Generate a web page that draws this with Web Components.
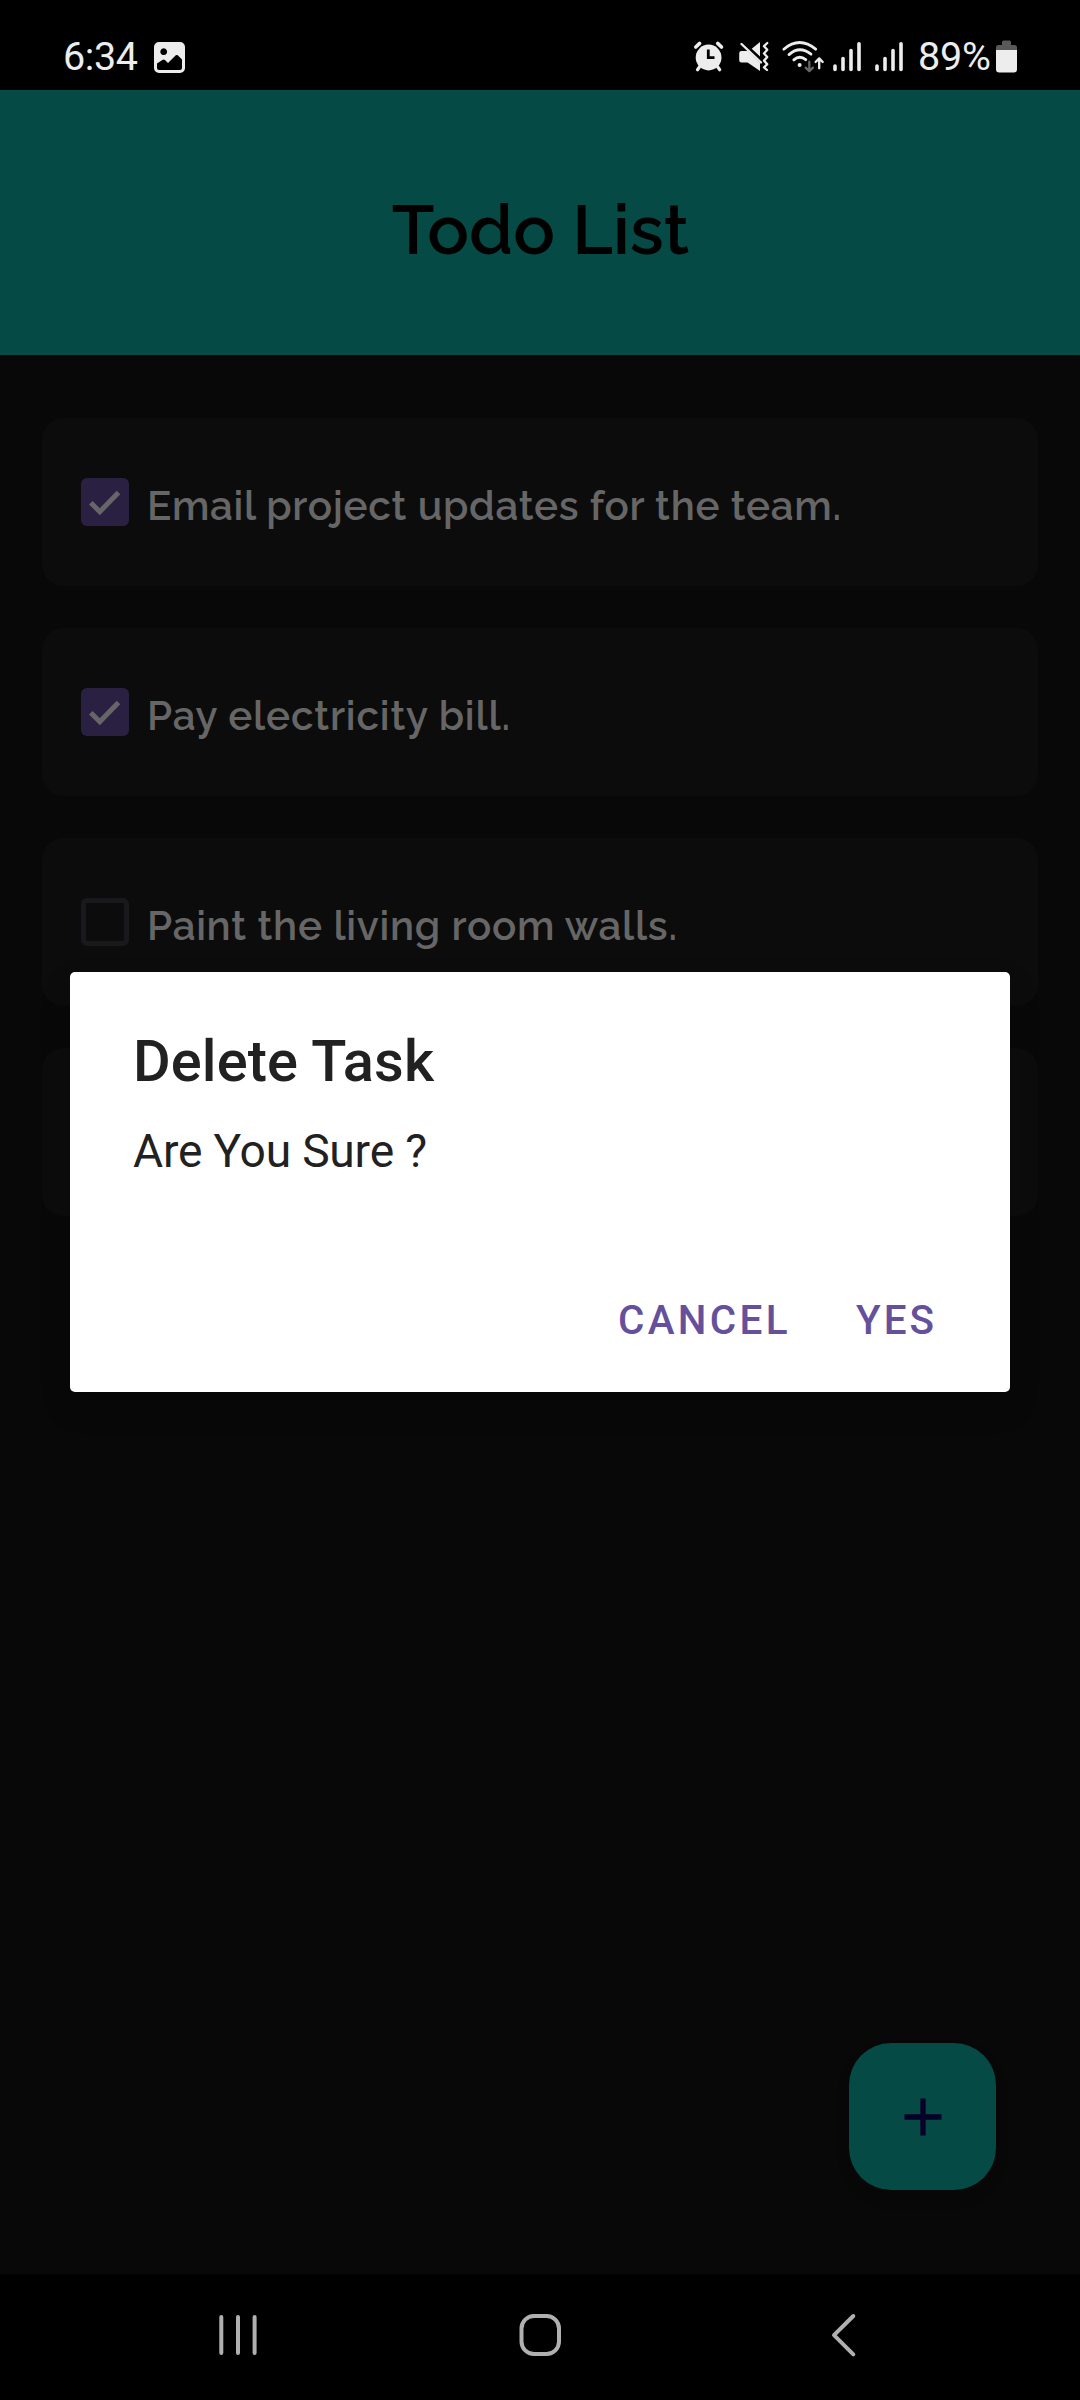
<!DOCTYPE html>
<html lang="en">
<head>
<meta charset="utf-8">
<title>Todo List</title>
<style>
html,body{margin:0;padding:0;background:#080808}
</style>
</head>
<body>
<todo-app></todo-app>
<script>
const define = (name, markup, setup) => {
  const template = document.createElement('template');
  template.innerHTML = markup;
  customElements.define(name, class extends HTMLElement {
    connectedCallback() {
      if (this.shadowRoot) return;
      this.attachShadow({mode: 'open'}).append(template.content.cloneNode(true));
      if (setup) setup(this, this.shadowRoot);
    }
  });
};

/* A single line of text, tracked so that it spans the given width. */
define('tracked-text', `
<style>:host{display:inline-block;white-space:nowrap}span{display:inline-block}</style>
<span></span>`, (host, root) => {
  const span = root.querySelector('span');
  span.textContent = host.getAttribute('text');
  const count = span.textContent.length - 1;
  const gap = (Number(host.getAttribute('span')) - span.getBoundingClientRect().width) / count;
  span.style.letterSpacing = gap + 'px';
  span.style.marginRight = -gap + 'px';
});

define('status-bar', `
<style>
:host{display:flex;height:90px;background:#000;color:#ededed;font:400 39.5px/90px Roboto,sans-serif}
svg{display:block;flex:none;height:90px;overflow:visible}
.time{padding-left:63px;width:91px;padding-top:12px;line-height:90px;height:78px}
.level{width:76px;padding-top:12px;height:78px;padding-left:1px}
.fill{flex:1}
</style>
<div class="time"><tracked-text text="6:34" span="75"></tracked-text></div>
<svg width="32" viewBox="154 0 32 90"><path fill="#ededed" fill-rule="evenodd" d="M159 42h21a5 5 0 0 1 5 5v21a5 5 0 0 1-5 5h-21a5 5 0 0 1-5-5V47a5 5 0 0 1 5-5zM163.700 48.300a3.400 3.400 0 1 0 .01 0zM157 63.500V68a2 2 0 0 0 2 2h21a2 2 0 0 0 2-2v-8.500l-4.200-4.200q-1-.8-2 0l-7.800 7.700-3-3q-1.300-1-2.600 0z"/></svg>
<div class="fill"></div>
<svg width="45" viewBox="692 0 45 90"><circle cx="708.600" cy="57.500" r="12.900" fill="#ededed"/><g fill="none" stroke="#ededed" stroke-linecap="round"><path stroke-width="3.600" d="M695.800 47l3.800-3.600M721.500 47l-3.800-3.600"/><path stroke-width="3.200" d="M699.800 66.500l-2.300 3.200M717.400 66.500l2.300 3.200"/></g><path d="M708.300 49.500v8.200h6.200" fill="none" stroke="#000" stroke-width="2.800"/></svg>
<svg width="45" viewBox="737 0 45 90"><path fill="#ededed" d="M741.500 51h6.200L760 62.800V71L747.600 62.500h-6.100a2.300 2.300 0 0 1-2.300-2.300v-7a2.300 2.300 0 0 1 2.300-2.200zM751.700 48.700L760 42v14.500z"/><path d="M741.500 44L761 62.500" fill="none" stroke="#ededed" stroke-width="2.400" stroke-linecap="round"/><path d="M744.500 43.400L762 60" stroke="#000" stroke-width="1.300"/><path fill="none" stroke="#ededed" stroke-width="2.300" stroke-linecap="round" stroke-linejoin="round" d="M767.300 43l-3.300 3.200 3.300 3.600-3.300 3.700 3.300 3.500-3.300 3.600 3.300 3.600-3.300 3.200 3 2.600"/></svg>
<svg width="50" viewBox="782 0 50 90"><g fill="none" stroke="#ededed" stroke-width="2.800" stroke-linecap="round" stroke-linejoin="round"><path d="M783.800 49.200Q799.500 35.800 815.700 49.200M789 54.600Q799.700 45 811 54.200M793.800 59.900Q799.600 54.600 805.800 59.700"/><path stroke-width="2.300" d="M819.200 68.300V59.200M815.600 62l3.600-3.600 3.500 3.600"/></g><circle cx="799.600" cy="65" r="2" fill="#ededed"/><path d="M809.300 61.700v9.100M805.700 67.600l3.600 3.500 3.600-3.500" fill="none" stroke="#666" stroke-width="2.300" stroke-linecap="round" stroke-linejoin="round"/></svg>
<svg width="42" viewBox="832 0 42 90"><path d="M835 66v3.500M843 58.500v11M851 50.500v19M859 43.700v25.800" stroke="#ededed" stroke-width="3.600" stroke-linecap="round"/></svg>
<svg width="43" viewBox="874 0 43 90"><path d="M877 66v3.500M885 58.500v11M893 50.500v19M901 43.700v25.800" stroke="#ededed" stroke-width="3.600" stroke-linecap="round"/></svg>
<div class="level"><tracked-text text="89%" span="73"></tracked-text></div>
<svg width="86" viewBox="994 0 86 90"><path fill="#595959" d="M996 50v-2.500a2.500 2.500 0 0 1 2.500-2.500h3.500v-3q0-1.500 1.500-1.500h6q1.500 0 1.500 1.500v3h3.500a2.500 2.500 0 0 1 2.500 2.500V50z"/><path fill="#ededed" d="M996 50h21v19.200a3.300 3.300 0 0 1-3.300 3.300h-14.400a3.300 3.300 0 0 1-3.300-3.300z"/></svg>
`);

define('app-header', `
<style>
:host{display:block;box-sizing:border-box;height:265px;padding:86px 0 0 1px;background:#054a44;color:#000;text-align:center;font:600 69.300px/108px Raleway,Lato,sans-serif}
</style><tracked-text text="Todo List" span="297.500"></tracked-text>`);

define('check-box', `
<style>
:host{display:block;box-sizing:border-box;width:48px;height:48px;border-radius:6px;border:5.500px solid #19191d}
:host([checked]){border:0;background:#2a2042}
svg{display:none}:host([checked]) svg{display:block}
</style>
<svg width="48" height="48" viewBox="0 0 48 48"><path d="M9.800 24.700L18.800 33.700L37.500 14.500" fill="none" stroke="#666" stroke-width="5"/></svg>`);

define('task-card', `
<style>
:host{display:flex;box-sizing:border-box;height:168px;padding:60px 39px 0;gap:18px;border-radius:21px;background:#0c0c0c;color:#666;font:600 40.400px/50px Raleway,Lato,sans-serif}
.label{padding-top:3px}
</style>
<check-box></check-box><div class="label"><slot></slot></div>`, (host, root) => {
  root.querySelector('check-box').toggleAttribute('checked', host.hasAttribute('checked'));
});

define('task-list', `
<style>:host{display:flex;flex-direction:column;gap:42px;padding:63px 42px 0}</style><slot></slot>`);

define('add-button', `
<style>
:host{display:flex;align-items:center;justify-content:center;width:147px;height:147px;border-radius:42px;background:#054a44;box-shadow:0 8px 14px #0002}
</style>
<svg width="38" height="38" viewBox="0 0 38 38"><path d="M19 .5v37M.5 19h37" stroke="#070027" stroke-width="5.300"/></svg>`);

define('confirm-dialog', `
<style>
:host{display:flex;flex-direction:column;box-sizing:border-box;width:940px;height:420px;padding:0 63px;border-radius:5px;background:#fff;color:#212121;font-family:Roboto,sans-serif;box-shadow:0 14px 30px #0003}
.title{padding-top:55px;font-size:57.750px;line-height:68px;font-weight:500}
.message{padding-top:29px;font-size:46.200px;line-height:54px}
.actions{display:flex;justify-content:flex-end;gap:68.500px;margin-top:auto;padding:0 13px 47px 0;color:#65509c;font-size:40.400px;line-height:48px;font-weight:500}
</style>
<div class="title"><tracked-text text="Delete Task" span="301"></tracked-text></div>
<div class="message"><tracked-text text="Are You Sure ?" span="294"></tracked-text></div>
<div class="actions"><tracked-text text="CANCEL" span="169.500"></tracked-text><tracked-text text="YES" span="78"></tracked-text></div>`);

define('nav-bar', `
<style>
:host{display:flex;justify-content:center;height:126px;background:#000}
svg{width:302px;height:126px}
g{fill:none;stroke:#b0b0b0;stroke-width:4;stroke-linecap:round;stroke-linejoin:round}
</style>
<svg viewBox="87 2274 302 126"><g><path d="M221.300 2317v36M238 2317v36M254.600 2317v36"/></g></svg>
<svg viewBox="389 2274 302 126"><g><rect x="521.500" y="2316" width="37.500" height="38" rx="12.500"/></g></svg>
<svg viewBox="691 2274 302 126"><g><path d="M853.300 2316L834 2335.100L853.300 2354.300"/></g></svg>`);

define('todo-app', `
<style>
:host{display:flex;flex-direction:column;position:relative;width:1080px;height:2400px;background:#080808;overflow:hidden}
task-list{flex:1}
add-button{position:absolute;right:84px;bottom:210px}
confirm-dialog{position:absolute;left:70px;top:972px}
</style>
<status-bar></status-bar>
<app-header></app-header>
<task-list>
<task-card checked><tracked-text text="Email project updates for the team." span="694"></tracked-text></task-card>
<task-card checked><tracked-text text="Pay electricity bill." span="363"></tracked-text></task-card>
<task-card><tracked-text text="Paint the living room walls." span="530"></tracked-text></task-card>
<task-card></task-card>
</task-list>
<nav-bar></nav-bar>
<add-button></add-button>
<confirm-dialog></confirm-dialog>`);
</script>
</body>
</html>
